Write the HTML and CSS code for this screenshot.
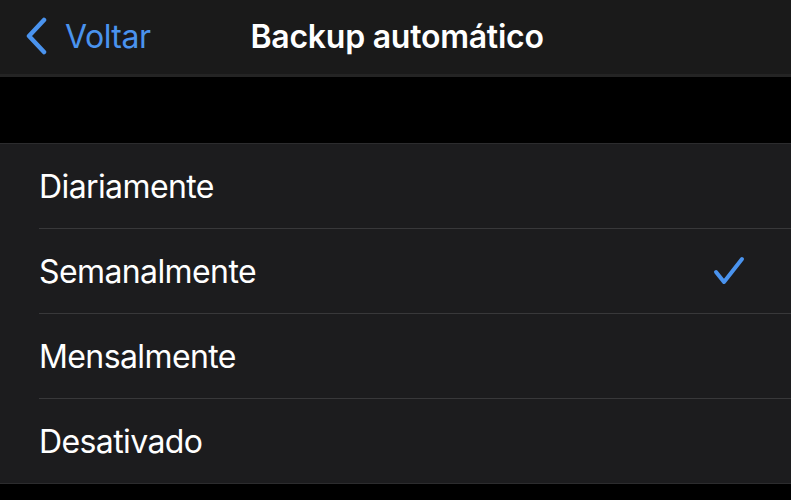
FILE: index.html
```html
<!DOCTYPE html>
<html>
  <head>
    <meta charset="utf-8">
    <title>Backup automático</title>
    <link rel="stylesheet" href="styles.css">
  </head>
  <body>
    <header class="nav">
      <a class="back" href="#">
        <svg class="chevron" width="24" height="38" viewBox="0 0 24 38">
          <path d="M20 3 L5 19 L20 35" fill="none" stroke="#4a93ee" stroke-width="4.5" stroke-linecap="round" stroke-linejoin="round"/>
        </svg>
        <span>Voltar</span>
      </a>
      <h1 class="title">Backup automático</h1>
    </header>

    <div class="spacer"></div>

    <ul class="options">
      <li class="option"><span>Diariamente</span></li>
      <li class="option selected">
        <span>Semanalmente</span>
        <svg class="check" width="32" height="30" viewBox="0 0 32 30">
          <path d="M3 16 L11 26 L29 3" fill="none" stroke="#4a93ee" stroke-width="4" stroke-linecap="round" stroke-linejoin="round"/>
        </svg>
      </li>
      <li class="option"><span>Mensalmente</span></li>
      <li class="option"><span>Desativado</span></li>
    </ul>
  </body>
</html>
```

FILE: styles.css
```css
body {
  margin: 0;
  background-color: #000;
  color: #fff;
  font-family: Inter, "Liberation Sans", sans-serif;
}
.nav {
  height: 72px;
  padding-bottom: 2px;
  background-color: #1a1a1a;
  border-bottom: 3px solid #242424;
  display: flex;
  align-items: center;
}
.back {
  display: flex;
  align-items: center;
  gap: 17px;
  padding-left: 24px;
  color: #4a93ee;
  text-decoration: none;
  font-size: 32px;
  letter-spacing: -0.5px;
}
.title {
  margin: 0 0 0 100px;
  font-size: 32px;
  font-weight: 600;
  letter-spacing: -0.25px;
}
.spacer {
  height: 66px;
}
.options {
  list-style: none;
  margin: 0;
  padding: 0 0 0 39px;
  background-color: #1c1c1e;
  border-top: 1px solid #2c2c2e;
  border-bottom: 1px solid #2c2c2e;
}
.option {
  height: 84px;
  display: flex;
  align-items: center;
  justify-content: space-between;
  padding-right: 46px;
  font-size: 32px;
  letter-spacing: -0.6px;
  border-bottom: 1px solid #38383a;
}
.option:last-child {
  border-bottom: none;
}
```
